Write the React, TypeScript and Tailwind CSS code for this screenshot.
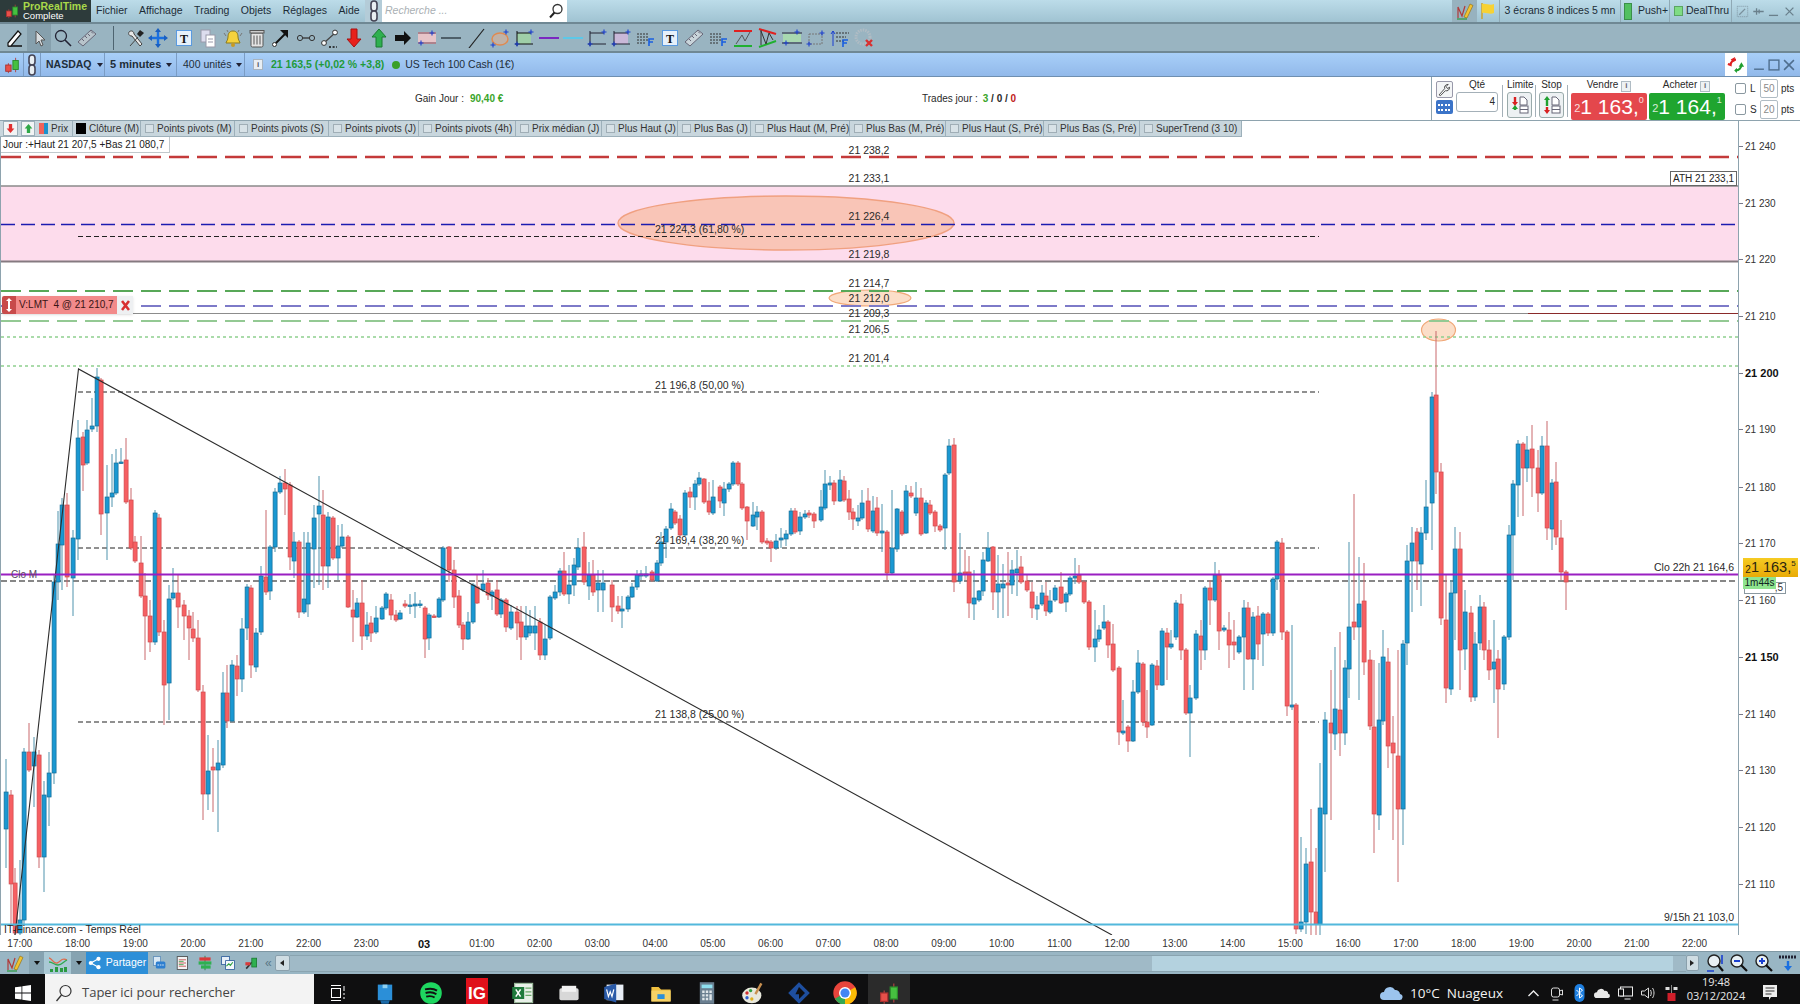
import type { ReactNode } from "react";

// x, body top, body bottom, 1 = blue / 0 = red, optional high, optional low (page px)
type Candle = [number, number, number, number, number?, number?];

const candles: Candle[] = [
  [5, 792, 829, 1, 759, 868], [10, 795, 884, 0, 790, 925], [14, 883, 933, 0, 868, 935], [19, 920, 933, 1, 860, 935],
  [23, 752, 920, 1, 748, 925], [28, 752, 770, 0, 723, 772], [33, 752, 766, 1, 737, 807], [38, 755, 857, 0, 750, 868],
  [43, 795, 857, 1, 781, 892], [48, 773, 797, 1, 752, 826], [53, 582, 773, 1, 575, 784], [57, 544, 582, 1, 511, 600],
  [61, 505, 545, 1, 498, 590], [66, 505, 577, 0, 493, 587], [72, 538, 578, 1, 530, 616], [77, 438, 539, 1, 420, 560],
  [82, 437, 465, 0, 432, 491], [86, 430, 463, 1, 420, 465], [91, 426, 429, 1, 398, 432], [96, 377, 426, 1, 368, 432],
  [100, 380, 514, 0, 378, 535], [106, 497, 513, 1, 465, 560], [111, 493, 497, 1, 454, 507], [115, 463, 493, 1, 449, 495],
  [120, 462, 463, 1, 448, 464], [125, 460, 502, 0, 438, 504], [130, 500, 548, 0, 488, 550], [134, 542, 561, 0, 536, 563],
  [140, 563, 596, 0, 536, 598], [144, 596, 616, 0, 573, 660], [149, 616, 642, 0, 600, 652], [154, 513, 642, 1, 510, 645],
  [158, 518, 632, 0, 514, 636], [163, 632, 685, 0, 620, 725], [168, 599, 683, 1, 585, 720], [172, 593, 598, 1, 568, 600],
  [177, 593, 607, 0, 575, 628], [183, 605, 616, 0, 600, 640], [188, 616, 628, 0, 610, 660], [192, 629, 638, 0, 612, 642],
  [197, 638, 690, 0, 620, 692], [202, 692, 794, 0, 685, 820], [207, 771, 794, 1, 735, 810], [212, 767, 770, 0, 748, 812],
  [217, 763, 770, 1, 740, 832], [222, 693, 765, 1, 672, 768], [226, 693, 721, 0, 665, 728], [231, 665, 721, 1, 660, 722],
  [236, 666, 679, 0, 655, 696], [241, 629, 679, 1, 618, 692], [246, 587, 628, 1, 584, 640], [250, 588, 665, 0, 585, 678],
  [255, 633, 667, 1, 628, 672], [260, 576, 632, 1, 566, 635], [265, 577, 592, 0, 510, 595], [269, 547, 591, 1, 545, 600],
  [274, 492, 547, 1, 488, 552], [279, 483, 492, 1, 476, 494], [284, 483, 489, 0, 469, 515], [289, 485, 557, 0, 482, 570],
  [293, 542, 561, 1, 532, 578], [298, 542, 612, 0, 540, 618], [303, 599, 612, 1, 532, 614], [307, 543, 604, 1, 532, 617],
  [313, 518, 549, 1, 505, 588], [318, 506, 514, 1, 476, 585], [322, 515, 566, 0, 490, 590], [327, 517, 566, 1, 512, 588],
  [332, 518, 558, 0, 516, 560], [337, 546, 558, 1, 525, 580], [341, 537, 546, 1, 524, 548], [347, 537, 607, 0, 535, 608],
  [352, 610, 617, 0, 590, 642], [356, 603, 617, 1, 598, 618], [361, 603, 636, 0, 580, 650], [366, 625, 636, 1, 612, 640],
  [370, 623, 633, 0, 616, 642], [375, 618, 632, 1, 606, 634], [381, 608, 619, 1, 606, 620], [385, 594, 608, 1, 592, 610],
  [390, 600, 615, 0, 594, 620], [395, 615, 620, 0, 610, 622], [399, 613, 619, 1, 610, 620], [404, 604, 606, 0, 600, 608],
  [409, 605, 606, 1, 594, 614], [414, 604, 606, 1, 592, 618], [419, 604, 605, 1, 600, 608], [424, 608, 639, 0, 606, 658],
  [428, 615, 638, 1, 613, 650], [433, 616, 617, 0, 614, 618], [438, 599, 617, 1, 597, 618], [442, 548, 600, 1, 546, 602],
  [448, 547, 570, 0, 546, 582], [453, 570, 597, 0, 560, 608], [458, 596, 625, 0, 590, 628], [462, 625, 639, 0, 622, 650],
  [467, 622, 639, 1, 612, 640], [472, 585, 622, 1, 583, 624], [476, 587, 603, 0, 575, 604], [482, 584, 590, 1, 570, 592],
  [487, 583, 595, 0, 578, 600], [491, 592, 596, 1, 590, 610], [496, 590, 614, 0, 580, 616], [500, 600, 614, 1, 598, 618],
  [505, 600, 627, 0, 598, 632], [510, 612, 628, 1, 605, 630], [516, 612, 623, 0, 606, 640], [520, 622, 637, 0, 606, 660],
  [525, 626, 637, 1, 606, 640], [529, 626, 633, 1, 610, 636], [534, 626, 633, 1, 606, 650], [539, 622, 655, 0, 618, 660],
  [544, 639, 655, 1, 625, 660], [549, 597, 638, 1, 595, 640], [554, 592, 598, 1, 585, 600], [559, 571, 592, 1, 568, 596],
  [563, 571, 594, 0, 552, 596], [568, 585, 594, 1, 565, 604], [573, 565, 585, 1, 558, 596], [577, 548, 567, 1, 538, 570],
  [583, 547, 582, 0, 532, 585], [588, 575, 586, 1, 562, 600], [592, 575, 592, 0, 560, 596], [597, 583, 590, 1, 570, 612],
  [602, 583, 590, 1, 570, 612], [611, 585, 607, 0, 580, 622], [617, 606, 611, 0, 596, 614], [621, 609, 611, 1, 596, 628],
  [627, 597, 609, 1, 595, 612], [631, 587, 597, 1, 583, 598], [636, 575, 587, 1, 570, 590], [640, 574, 576, 1, 570, 580],
  [645, 574, 576, 1, 566, 578], [651, 572, 580, 0, 570, 582], [656, 563, 581, 1, 560, 582], [660, 542, 563, 1, 532, 566],
  [665, 529, 542, 1, 526, 558], [670, 509, 528, 1, 503, 530], [674, 512, 523, 0, 510, 525], [679, 519, 535, 0, 515, 540],
  [684, 493, 535, 1, 490, 536], [689, 492, 497, 0, 487, 508], [694, 484, 497, 1, 480, 510], [698, 478, 484, 1, 472, 486],
  [703, 479, 502, 0, 478, 504], [708, 501, 512, 0, 482, 515], [712, 497, 513, 1, 480, 515], [719, 487, 501, 0, 485, 508],
  [723, 489, 503, 1, 482, 516], [728, 484, 489, 1, 482, 492], [732, 463, 484, 1, 461, 486], [737, 463, 484, 0, 461, 486],
  [741, 484, 508, 0, 482, 510], [746, 507, 521, 0, 506, 540], [752, 515, 526, 1, 502, 527], [756, 512, 517, 1, 506, 530],
  [761, 512, 542, 0, 510, 544], [766, 541, 543, 0, 538, 545], [770, 542, 548, 0, 540, 562], [775, 541, 548, 1, 534, 550],
  [780, 538, 540, 1, 528, 548], [785, 534, 539, 1, 530, 546], [790, 511, 534, 1, 508, 536], [794, 511, 532, 0, 508, 534],
  [799, 517, 531, 1, 512, 535], [804, 514, 517, 1, 510, 519], [808, 513, 515, 0, 510, 518], [813, 514, 521, 0, 512, 528],
  [820, 507, 520, 1, 490, 522], [824, 484, 508, 1, 470, 510], [829, 483, 485, 1, 476, 490], [833, 483, 501, 0, 480, 505],
  [839, 480, 501, 1, 470, 502], [843, 481, 500, 0, 476, 502], [848, 499, 512, 0, 490, 520], [852, 512, 519, 0, 508, 530],
  [857, 518, 521, 1, 505, 526], [861, 503, 518, 1, 490, 520], [867, 501, 529, 0, 488, 532], [872, 511, 531, 1, 496, 533],
  [876, 508, 533, 0, 497, 536], [881, 531, 533, 1, 504, 552], [886, 532, 573, 0, 530, 580], [891, 548, 573, 1, 490, 575],
  [896, 509, 549, 1, 508, 552], [901, 512, 534, 0, 510, 536], [905, 491, 533, 1, 485, 534], [910, 493, 496, 0, 486, 498],
  [915, 498, 513, 1, 482, 516], [920, 498, 534, 0, 488, 536], [925, 503, 533, 1, 500, 534], [929, 505, 513, 0, 500, 515],
  [934, 512, 526, 0, 510, 532], [939, 526, 530, 0, 524, 532], [944, 475, 528, 1, 473, 550], [948, 446, 473, 1, 439, 475],
  [953, 445, 582, 0, 438, 592], [959, 573, 581, 1, 533, 584], [964, 572, 574, 0, 550, 580], [968, 572, 603, 0, 556, 618],
  [973, 598, 604, 1, 570, 620], [978, 591, 600, 1, 590, 602], [982, 560, 591, 1, 552, 596], [987, 548, 561, 1, 532, 562],
  [992, 547, 592, 0, 546, 610], [997, 584, 592, 1, 555, 618], [1002, 584, 588, 1, 564, 618], [1007, 583, 585, 0, 552, 616],
  [1011, 570, 585, 1, 560, 594], [1016, 569, 573, 1, 550, 596], [1020, 567, 582, 0, 556, 584], [1026, 581, 590, 0, 575, 592],
  [1031, 592, 608, 0, 582, 618], [1036, 605, 609, 1, 596, 620], [1041, 593, 604, 1, 585, 606], [1045, 596, 611, 0, 582, 616],
  [1049, 601, 612, 1, 590, 614], [1054, 588, 600, 1, 585, 602], [1060, 587, 603, 0, 572, 604], [1065, 594, 602, 1, 592, 612],
  [1069, 578, 594, 1, 576, 596], [1074, 576, 578, 1, 558, 584], [1078, 575, 582, 0, 565, 584], [1083, 582, 602, 0, 580, 604],
  [1088, 602, 647, 0, 600, 650], [1094, 639, 647, 1, 610, 662], [1098, 630, 639, 1, 625, 642], [1103, 622, 628, 1, 605, 630],
  [1107, 622, 645, 0, 620, 658], [1112, 644, 670, 0, 624, 672], [1118, 668, 732, 0, 666, 745], [1122, 731, 733, 1, 700, 735],
  [1127, 727, 741, 0, 725, 752], [1132, 692, 741, 1, 680, 742], [1137, 663, 692, 1, 650, 694], [1142, 664, 722, 0, 662, 726],
  [1146, 722, 727, 0, 690, 738], [1151, 665, 725, 1, 663, 726], [1156, 666, 685, 0, 660, 690], [1161, 631, 685, 1, 628, 686],
  [1166, 633, 647, 0, 628, 680], [1170, 644, 647, 1, 630, 649], [1175, 603, 637, 1, 600, 640], [1180, 604, 650, 0, 594, 660],
  [1185, 650, 713, 0, 648, 715], [1189, 698, 713, 1, 685, 757], [1195, 634, 698, 1, 630, 700], [1200, 636, 650, 0, 620, 670],
  [1204, 588, 650, 1, 586, 660], [1209, 588, 600, 0, 580, 625], [1214, 575, 600, 1, 562, 602], [1218, 575, 631, 0, 570, 650],
  [1223, 628, 630, 1, 625, 632], [1228, 630, 645, 0, 612, 668], [1233, 642, 645, 0, 620, 660], [1238, 637, 652, 1, 635, 654],
  [1243, 608, 637, 1, 600, 690], [1247, 608, 659, 0, 602, 660], [1252, 617, 659, 1, 612, 690], [1257, 616, 644, 0, 606, 660],
  [1262, 614, 634, 1, 612, 666], [1267, 614, 633, 0, 612, 636], [1272, 579, 633, 1, 577, 636], [1276, 542, 579, 1, 540, 590],
  [1281, 543, 632, 0, 538, 640], [1286, 632, 706, 0, 630, 716], [1291, 705, 707, 1, 625, 710], [1295, 705, 929, 0, 703, 934],
  [1300, 922, 929, 1, 837, 932], [1305, 864, 922, 1, 848, 934], [1310, 862, 912, 0, 809, 935], [1315, 912, 924, 0, 848, 935],
  [1319, 808, 924, 1, 763, 935], [1324, 720, 814, 1, 712, 872], [1330, 723, 733, 0, 670, 820], [1334, 709, 734, 1, 647, 750],
  [1339, 710, 733, 0, 632, 756], [1344, 668, 733, 1, 660, 745], [1348, 627, 669, 1, 542, 698], [1353, 622, 627, 0, 494, 640],
  [1358, 604, 627, 1, 557, 700], [1363, 601, 662, 0, 563, 675], [1369, 660, 726, 0, 650, 730], [1373, 727, 814, 0, 660, 853],
  [1378, 720, 815, 1, 663, 830], [1382, 657, 721, 1, 630, 725], [1387, 662, 746, 0, 648, 768], [1392, 743, 753, 0, 716, 840],
  [1397, 756, 809, 0, 650, 882], [1402, 644, 809, 1, 640, 845], [1406, 561, 643, 1, 545, 665], [1411, 543, 561, 1, 527, 612],
  [1416, 532, 561, 0, 528, 590], [1420, 533, 564, 1, 527, 606], [1425, 507, 533, 1, 480, 540], [1431, 397, 503, 1, 392, 550],
  [1435, 395, 472, 0, 331, 494], [1440, 472, 618, 0, 463, 625], [1445, 620, 688, 0, 575, 703], [1450, 593, 689, 1, 580, 695],
  [1454, 549, 593, 1, 527, 640], [1459, 549, 650, 0, 532, 690], [1464, 612, 649, 1, 590, 670], [1470, 613, 697, 0, 606, 702],
  [1474, 644, 697, 1, 632, 701], [1479, 607, 643, 1, 595, 650], [1483, 607, 650, 0, 602, 660], [1488, 650, 670, 0, 640, 680],
  [1493, 662, 669, 1, 620, 703], [1497, 659, 689, 0, 650, 738], [1503, 637, 684, 1, 635, 690], [1508, 535, 637, 1, 525, 640],
  [1512, 484, 535, 1, 480, 580], [1517, 444, 485, 1, 440, 517], [1522, 444, 468, 0, 442, 516], [1526, 450, 468, 1, 436, 482],
  [1531, 449, 468, 0, 425, 497], [1537, 468, 493, 0, 450, 512], [1541, 446, 493, 1, 436, 495], [1546, 446, 528, 0, 421, 540],
  [1551, 483, 529, 1, 479, 550], [1555, 482, 537, 0, 462, 545], [1560, 538, 572, 0, 520, 580], [1565, 572, 582, 0, 570, 610],
];

const priceLevels = [
  ["21 240", 146], ["21 230", 203], ["21 220", 259], ["21 210", 316], ["21 200", 373], ["21 190", 429], ["21 180", 487],
  ["21 170", 543], ["21 160", 600], ["21 150", 657], ["21 140", 714], ["21 130", 770], ["21 120", 827], ["21 110", 884],
] as const;

const midLabels = [
  ["21 238,2", 150], ["21 233,1", 178], ["21 226,4", 216], ["21 219,8", 254], ["21 214,7", 283],
  ["21 212,0", 298], ["21 209,3", 313], ["21 206,5", 329], ["21 201,4", 358],
] as const;

const fibLabels = [
  ["21 224,3 (61,80 %)", 229], ["21 196,8 (50,00 %)", 385], ["21 169,4 (38,20 %)", 540], ["21 138,8 (25,00 %)", 714],
] as const;

const hours = [
  "17:00", "18:00", "19:00", "20:00", "21:00", "22:00", "23:00", "03", "01:00", "02:00", "03:00", "04:00", "05:00", "06:00", "07:00",
  "08:00", "09:00", "10:00", "11:00", "12:00", "13:00", "14:00", "15:00", "16:00", "17:00", "18:00", "19:00", "20:00", "21:00", "22:00",
];

const indicatorTabs: [string, number][] = [
  ["Points pivots (M)", 94], ["Points pivots (S)", 94], ["Points pivots (J)", 90], ["Points pivots (4h)", 97], ["Prix médian (J)", 86],
  ["Plus Haut (J)", 76], ["Plus Bas (J)", 73], ["Plus Haut (M, Pré)", 99], ["Plus Bas (M, Pré)", 96], ["Plus Haut (S, Pré)", 98],
  ["Plus Bas (S, Pré)", 96], ["SuperTrend (3 10)", 102],
];

function Ic({ size = 20, children }: { size?: number; children: ReactNode }) {
  return (
    <svg width={size} height={size} viewBox="0 0 20 20" fill="none" className="shrink-0">
      {children}
    </svg>
  );
}

const Plus = ({ x, y, c = "#1a3fd0" }: { x: number; y: number; c?: string }) => (
  <path d={`M${x - 2.5} ${y}h5M${x} ${y - 2.5}v5`} stroke={c} strokeWidth="1.1" />
);

const FibF = ({ c = "#333" }: { c?: string }) => (
  <Ic>
    <path d="M1 6h11M1 9h11M1 12h11M1 15h8" stroke={c} strokeWidth="1" strokeDasharray="2 1" />
    <path d="M13 18v-7h5M13 14h4" stroke="#1a5fe0" strokeWidth="1.6" />
  </Ic>
);

const CandleIcon = ({ size = 20 }: { size?: number }) => (
  <Ic size={size}>
    <path d="M6 8v11M14 2v16" stroke="#b04040" strokeWidth="1" />
    <rect x="3" y="10" width="6" height="7" fill="#e8504a" stroke="#a83030" />
    <rect x="11" y="5" width="6" height="10" fill="#46c040" stroke="#2a8a2a" />
  </Ic>
);

const LinkIcon = () => (
  <svg width="12" height="22" viewBox="0 0 12 22" fill="none" className="shrink-0">
    <rect x="3" y="1" width="6" height="10" rx="3" stroke="#445" strokeWidth="1.6" fill="#e8eef2" />
    <rect x="3" y="11" width="6" height="10" rx="3" stroke="#445" strokeWidth="1.6" fill="#e8eef2" />
  </svg>
);

const toolIcons: ReactNode[] = [
  <Ic><path d="M3 17l6-7 2 2-5 7zM11 10l3-5 3 2-3 5z" fill="#556" /><path d="M12 10l5 2" stroke="#c33" strokeWidth="1.5" /></Ic>,
  <Ic><path d="M5 4l2 2-3 3 2 2 3-3 6 7 2-2-7-6 3-3-3-3-3 1z" fill="#eee" stroke="#444" /></Ic>,
  <Ic><path d="M10 2v16M2 10h16" stroke="#1a6fe0" strokeWidth="2.4" /><path d="M10 0l3 4H7zM10 20l3-4H7zM0 10l4-3v6zM20 10l-4-3v6z" fill="#1a5fc0" /></Ic>,
  <Ic><rect x="2.5" y="2.5" width="15" height="15" fill="#e6f0fa" stroke="#5a9ae0" /><text x="10" y="15" textAnchor="middle" fontSize="12" fontWeight="700" fontFamily="Liberation Serif" fill="#111">T</text></Ic>,
  <Ic><rect x="3" y="2" width="9" height="12" fill="#dde" stroke="#99a" /><rect x="8" y="7" width="9" height="12" fill="#fff" stroke="#99a" /><path d="M10 11h5M10 14h5" stroke="#99a" /></Ic>,
  <Ic><path d="M10 3c-4 0-5 3-5 6 0 3-2 5-2 6h14c0-1-2-3-2-6 0-3-1-6-5-6z" fill="#f5d23c" stroke="#8a7a20" /><circle cx="10" cy="17" r="2" fill="#c89a20" /><path d="M1 5l2 3M19 5l-2 3M4 2l1 2M16 2l-1 2" stroke="#777" /></Ic>,
  <Ic><rect x="4" y="5" width="12" height="14" rx="1.5" fill="#e4e4e4" stroke="#555" /><rect x="3" y="2.5" width="14" height="2.5" fill="#ccc" stroke="#555" /><path d="M7 7.5v9M10 7.5v9M13 7.5v9" stroke="#555" /></Ic>,
  <Ic><path d="M3 17L15 5" stroke="#111" strokeWidth="2" /><path d="M17 2v8l-8-8z" fill="#111" /><circle cx="3.5" cy="16.5" r="2" fill="#fff" stroke="#333" /></Ic>,
  <Ic><circle cx="4" cy="10" r="2.6" stroke="#333" /><circle cx="16" cy="10" r="2.6" stroke="#333" /><path d="M7 10h6" stroke="#333" strokeWidth="1.3" /></Ic>,
  <Ic><path d="M5 14L15 5" stroke="#444" strokeWidth="1.2" /><circle cx="4" cy="15" r="2.4" fill="#fff" stroke="#333" /><circle cx="15" cy="4.5" r="2.4" fill="#fff" stroke="#333" /><path d="M9 19h8" stroke="#111" strokeWidth="1.5" strokeDasharray="2 1.6" /></Ic>,
  <Ic><path d="M7 1h6v10h4l-7 8-7-8h4z" fill="#e8201c" stroke="#a81010" /></Ic>,
  <Ic><path d="M10 1l7 8h-4v10H7V9H3z" fill="#2fb050" stroke="#1a7a30" /></Ic>,
  <Ic><path d="M2 7h9V3l7 7-7 7v-4H2z" fill="#111" /></Ic>,
  <Ic><rect x="1" y="6" width="18" height="8" fill="#e6c4c8" /><path d="M1 5h18M1 15h18" stroke="#c05058" /><Plus x={15} y={5} /><Plus x={4} y={15} /></Ic>,
  <Ic><path d="M0 10h20" stroke="#3c4a54" strokeWidth="1.6" /></Ic>,
  <Ic><path d="M3 20L18 1" stroke="#222" strokeWidth="1.2" /></Ic>,
  <Ic><ellipse cx="10" cy="11" rx="8" ry="6" fill="#e5b08f" fillOpacity=".5" stroke="#e08a50" strokeWidth="1.5" /><Plus x={16} y={4} /><Plus x={3} y={17} /></Ic>,
  <Ic><rect x="3" y="5" width="14" height="11" fill="#9fcfa8" /><path d="M3 5h14M1 16h18M3 3v15" stroke="#111" /><Plus x={17} y={4} /><Plus x={3} y={16} /></Ic>,
  <Ic><path d="M0 10h20" stroke="#7a28c0" strokeWidth="2" /></Ic>,
  <Ic><path d="M0 10h20" stroke="#5cc8e8" strokeWidth="2" /></Ic>,
  <Ic><path d="M3 5h14M1 16h18M3 3v15" stroke="#223" /><Plus x={17} y={4} /><Plus x={3} y={16} /></Ic>,
  <Ic><rect x="3" y="5" width="14" height="11" fill="#c9b8d8" /><path d="M3 5h14M1 16h18M3 3v15" stroke="#223" /><Plus x={17} y={4} /><Plus x={3} y={16} /></Ic>,
  <FibF />,
  <Ic><rect x="2.5" y="2.5" width="15" height="15" fill="#e6f0fa" stroke="#5a9ae0" /><text x="10" y="15" textAnchor="middle" fontSize="12" fontWeight="700" fontFamily="Liberation Serif" fill="#111">T</text></Ic>,
  <Ic><path d="M1 14L14 2l5 4L6 18z" fill="#c9d4da" stroke="#667" /><path d="M5 11l2 2M8 8l2 2M11 6l2 2M14 3.5l2 2" stroke="#667" /></Ic>,
  <FibF />,
  <Ic><path d="M1 3h18" stroke="#e02020" strokeWidth="2" /><path d="M1 18h18" stroke="#20b030" strokeWidth="2" /><path d="M3 16l6-9 3 6 5-9" stroke="#555" /></Ic>,
  <Ic><path d="M2 1l17 5" stroke="#e02020" strokeWidth="2" /><path d="M2 19l17-6" stroke="#20b030" strokeWidth="2" /><path d="M4 2v15M4 3l5 13 3-11 4 7" stroke="#333" /></Ic>,
  <Ic><rect x="1" y="6" width="18" height="8" fill="#a8d8b0" /><path d="M0 5h20M0 15h20" stroke="#223" /><Plus x={15} y={4} /><Plus x={4} y={15} /></Ic>,
  <Ic><rect x="3" y="6" width="13" height="10" stroke="#777" strokeDasharray="2 1" /><Plus x={16} y={5} /><Plus x={3} y={16} /></Ic>,
  <Ic><path d="M6 5h13M6 9h10M6 13h8" stroke="#333" strokeWidth="1" strokeDasharray="2 1" /><path d="M3 18V3M1 6l2-3 2 3" stroke="#1a3fd0" /><path d="M13 19v-7h5M13 15h4" stroke="#1a5fe0" strokeWidth="1.6" /></Ic>,
  <Ic><circle cx="9" cy="9" r="7" stroke="#b0bcc4" strokeWidth="3" strokeDasharray="1.5 1" /><path d="M12 12l6 6M18 12l-6 6" stroke="#d83030" strokeWidth="2.4" /></Ic>,
];

function IconSlot({ children, className = "" }: { children: ReactNode; className?: string }) {
  return <div className={`w-6 h-full flex items-center justify-center shrink-0 ${className}`}>{children}</div>;
}

function TopBar() {
  return (
    <div className="h-[24px] shrink-0 flex items-stretch text-[10.5px] text-[#1c2c36] bg-gradient-to-b from-[#bcdce9] to-[#a0c3d2] border-b-2 border-[#6f8894]">
      <div className="w-[91px] bg-[#2d3b3b] flex items-center pl-1 gap-[3px]">
        <CandleIcon size={16} />
        <div className="leading-[10px]">
          <div className="text-[10.5px] text-[#a8d84a] font-bold">ProRealTime</div>
          <div className="text-[9.5px] text-white">Complete</div>
        </div>
      </div>
      <div className="flex items-center ml-[5px] gap-[11.5px] w-[269px]">
        {["Fichier", "Affichage", "Trading", "Objets", "Réglages", "Aide"].map((m) => (
          <span key={m}>{m}</span>
        ))}
      </div>
      <div className="w-[17px] flex items-center justify-center bg-[#b4ccd8]"><LinkIcon /></div>
      <div className="w-[185px] bg-white flex items-center justify-between pl-[3px] pr-[3px]">
        <span className="italic text-[#aab0b4]">Recherche ...</span>
        <svg width="16" height="16" viewBox="0 0 16 16" fill="none">
          <circle cx="9.5" cy="6" r="4.5" stroke="#333" strokeWidth="1.3" />
          <path d="M6.5 9.5L2 14.5" stroke="#222" strokeWidth="2" />
        </svg>
      </div>
      <div className="flex-1" />
      <div className="w-[25px] bg-[#97b2bf] flex items-center justify-center">
        <Ic><path d="M3 17V6l4 9 3-10" stroke="#b03a3a" strokeWidth="1.2" /><path d="M9 16L15 3l3 1.5L12 17z" fill="#f2c230" stroke="#8a6a10" strokeWidth=".6" /><path d="M2 18h10" stroke="#2a9a40" strokeWidth="1.2" /></Ic>
      </div>
      <div className="w-[23px] flex items-center justify-center border-r border-[#8fa9b5]">
        <Ic><path d="M4 2v16" stroke="#c9a63a" strokeWidth="1.6" /><path d="M4 3c4-1 8 2 12 0v9c-4 2-8-1-12 0z" fill="#f7d234" /></Ic>
      </div>
      <div className="w-[121px] flex items-center justify-center border-r border-[#8fa9b5]">3 écrans 8 indices 5 mn</div>
      <div className="w-[49px] flex items-center gap-[6px] pl-[3px] border-r border-[#8fa9b5]">
        <div className="w-[8px] h-[17px] bg-[#52c060] border border-[#3b8f4a]" />
        <span>Push+</span>
      </div>
      <div className="w-[62px] flex items-center gap-[3px] pl-1 border-r border-[#8fa9b5]">
        <div className="w-[9px] h-[10px] bg-[#7fdc84] border border-[#5aa562]" />
        <span>DealThru</span>
      </div>
      <div className="w-[68px] flex items-center justify-around px-[3px]">
        <Ic size={13}><rect x="2" y="2" width="16" height="16" stroke="#7a909c" strokeDasharray="2 1" /><path d="M5 15L14 6" stroke="#7a909c" strokeWidth="2" /></Ic>
        <Ic size={13}><path d="M2 10h16M7 5v10M11 7v6" stroke="#6a808c" strokeWidth="2" /></Ic>
        <Ic size={13}><path d="M3 16h14" stroke="#6a808c" strokeWidth="2" /></Ic>
        <Ic size={13}><path d="M4 4l12 12M16 4L4 16" stroke="#6a808c" strokeWidth="2" /></Ic>
      </div>
    </div>
  );
}

function ToolBar() {
  return (
    <div className="h-[29px] shrink-0 flex items-center bg-[#99b4c1] border-b-2 border-[#6f8894] pl-[3px]">
      <IconSlot><Ic><path d="M3 18h14" stroke="#111" strokeWidth="1.5" /><path d="M3 15L13 3l3 3L6 18H3z" fill="#fff" stroke="#111" strokeWidth="1.2" /></Ic></IconSlot>
      <IconSlot className="bg-[#86a0ad]"><Ic><path d="M7 3v13l3-3 2 5 2-1-2-5h4z" fill="#d8dde0" stroke="#555" /></Ic></IconSlot>
      <IconSlot><Ic><circle cx="8" cy="8" r="5.5" stroke="#223" strokeWidth="1.3" /><path d="M12 12l6 6" stroke="#223" strokeWidth="1.6" /></Ic></IconSlot>
      <IconSlot><Ic><path d="M1 14L14 2l5 4L6 18z" fill="#b8c4cb" stroke="#667" /><path d="M5 11l2 2M8 8l2 2M11 6l2 2M14 3.5l2 2" stroke="#667" /></Ic></IconSlot>
      <div className="w-[1px] h-[24px] bg-[#4e6470] ml-[14px] mr-[12px] shrink-0" />
      <Ic><path d="M4 18l8-9M3 4c2-2 5-1 5 2l8 10-2 2L6 8C3 8 2 6 3 4z" fill="#e8e8e8" stroke="#444" /><path d="M11 6l3-4 4 3-4 4z" fill="#222" /></Ic>
      <div className="flex items-center ml-[2px]">
        {toolIcons.slice(2, 3)}
        <div className="w-[4px]" />
        {toolIcons.slice(3).map((icon, i) => (
          <div key={i} className="w-[24.3px] flex justify-center shrink-0">{icon}</div>
        ))}
      </div>
    </div>
  );
}

function SymbolBar() {
  const caret = <span className="w-0 h-0 border-x-[3px] border-x-transparent border-t-[4px] border-t-[#223]" />;
  return (
    <div className="h-[24px] shrink-0 flex items-stretch bg-gradient-to-b from-[#a8cff8] to-[#92b9ea] border-b border-[#6f8fb0] text-[10.5px] text-[#1e2e3a]">
      <div className="w-[24px] flex items-center justify-center border-r border-[#7a9cc4]"><CandleIcon size={18} /></div>
      <div className="w-[17px] flex items-center justify-center border-r border-[#7a9cc4]"><LinkIcon /></div>
      <div className="w-[64px] flex items-center gap-[5px] pl-[5px] font-bold border-r border-[#7a9cc4]">NASDAQ {caret}</div>
      <div className="w-[72px] flex items-center gap-[5px] pl-[5px] font-bold text-[11px] border-r border-[#7a9cc4]">5 minutes {caret}</div>
      <div className="w-[68px] flex items-center gap-[5px] pl-[6px] border-r border-[#7a9cc4]">400 unités {caret}</div>
      <div className="flex items-center pl-[8px] gap-[8px]">
        <span className="w-[10px] h-[11px] bg-[#e8eef4] border border-[#a8b4c0] flex items-center justify-center text-[8px] font-bold text-[#556]">i</span>
        <span className="font-bold text-[#1f9a3a]">21 163,5 (+0,02 % +3,8)</span>
        <span className="w-[8px] h-[8px] rounded-full bg-[#3aa028] -mr-[3px]" />
        <span>US Tech 100 Cash (1€)</span>
      </div>
      <div className="flex-1" />
      <div className="w-[22px] bg-white flex items-center justify-center">
        <Ic size={18}><path d="M10 4a6 6 0 00-6 6l-3-1" stroke="#e02020" strokeWidth="2.4" /><path d="M9 1L4 4l4 3z" fill="#e02020" /><path d="M10 16a6 6 0 006-6" stroke="#20a030" strokeWidth="2.4" /><path d="M16 7l3 5h-6zM11 13l-3 3 3 3z" fill="#20a030" /></Ic>
      </div>
      <div className="w-[53px] flex items-center justify-around px-[4px]">
        <Ic size={14}><path d="M3 16h14" stroke="#4f6e8e" strokeWidth="2" /></Ic>
        <Ic size={14}><rect x="3" y="3" width="14" height="14" stroke="#4f6e8e" strokeWidth="2" /></Ic>
        <Ic size={14}><path d="M3 3l14 14M17 3L3 17" stroke="#4f6e8e" strokeWidth="2.2" /></Ic>
      </div>
    </div>
  );
}

function PriceButton({ head, main, tail, color }: { head: string; main: string; tail: string; color: string }) {
  return (
    <div className={`w-[76px] h-[27px] rounded-[2px] flex items-center justify-center text-white whitespace-nowrap ${color}`}>
      <span className="text-[11px] mt-[5px] opacity-80">{head}</span>
      <span className="text-[21px] leading-none">{main}</span>
      <span className="text-[9px] -mt-[10px] opacity-80">{tail}</span>
    </div>
  );
}

const InfoBox = () => (
  <span className="inline-flex w-[10px] h-[11px] ml-[3px] bg-[#eef2f4] border border-[#b0bcc4] items-center justify-center text-[8px] font-bold text-[#667]">i</span>
);

const OrderIcon = ({ up }: { up: boolean }) => (
  <div className="w-[25px] h-[26px] rounded-[3px] border border-[#9aa] bg-[#edf1f3] flex items-center justify-center">
    <Ic>
      <path d={up ? "M5 11V4" : "M5 2v6"} stroke={up ? "#20a030" : "#d82020"} strokeWidth="2.4" />
      <path d={up ? "M5 1l3 4H2z" : "M5 11l3-4H2z"} fill={up ? "#20a030" : "#d82020"} />
      <path d={up ? "M5 12v4" : "M5 15v-2"} stroke={up ? "#d82020" : "#20a030"} strokeWidth="2.4" />
      <path d={up ? "M5 19l3-4H2z" : "M5 10l3 4H2z"} fill={up ? "#d82020" : "#20a030"} />
      <path d="M10 2h4l3 3v5h-7z" fill="#fff" stroke="#667" />
      <rect x="10" y="11" width="8" height="7" fill="#fff" stroke="#667" />
      <path d="M10 14.5h8" stroke="#667" />
    </Ic>
  </div>
);

function InfoPanel() {
  return (
    <div className="h-[44px] shrink-0 bg-white flex items-stretch text-[10px] text-[#2a2a2a] border-b border-[#8ea3ae]">
      <div className="flex-1 relative flex items-center">
        <div className="ml-[415px] w-[507px] flex items-center gap-[6px]">
          <span>Gain Jour :</span>
          <span className="font-bold text-[#3aa52a]">90,40 €</span>
        </div>
        <div className="flex items-center gap-[5px]">
          <span>Trades jour :</span>
          <span className="font-bold"><span className="text-[#3aa52a]">3</span> / 0 / <span className="text-[#c02020]">0</span></span>
        </div>
      </div>
      <div className="w-[369px] border-l border-[#8ea3ae] flex items-start pt-[3px] pl-[3px]">
        <div className="w-[18px] flex flex-col items-center gap-[2px] mt-[1px]">
          <div className="w-[17px] h-[17px] border border-[#99a] rounded-[2px] flex items-center justify-center bg-[#f3f5f6]">
            <Ic size={14}><path d="M3 17l8-9c-1-3 1-6 5-6l-3 3 2 3 3-2c0 4-3 6-6 5l-7 7z" stroke="#333" strokeWidth="1.2" /></Ic>
          </div>
          <div className="w-[17px] h-[14px] bg-[#3b74c8] rounded-[2px] flex items-center justify-center">
            <span className="w-[12px] h-[7px] border-y-2 border-dotted border-white" />
          </div>
        </div>
        <div className="w-[42px] ml-[3px]">
          <div className="text-center leading-[12px] mt-[-1px]">Qté</div>
          <div className="h-[20px] mt-[1px] rounded-[3px] border border-[#a4b0b8] text-right pr-[2px] leading-[18px]">4</div>
        </div>
        <div className="w-[1px] h-[32px] bg-[#a4b0b8] ml-[4px] mt-[5px]" />
        <div className="w-[25px] ml-[4px] text-center">
          <div className="leading-[12px] mt-[-1px] mb-[1px]">Limite</div>
          <OrderIcon up={false} />
        </div>
        <div className="w-[1px] h-[32px] bg-[#a4b0b8] ml-[3px] mt-[5px]" />
        <div className="w-[25px] ml-[3px] text-center">
          <div className="leading-[12px] mt-[-1px] mb-[1px]">Stop</div>
          <OrderIcon up />
        </div>
        <div className="w-[1px] h-[32px] bg-[#a4b0b8] ml-[3px] mt-[5px]" />
        <div className="w-[76px] ml-[3px]">
          <div className="text-center leading-[12px] mt-[-1px] mb-[1px]">Vendre<InfoBox /></div>
          <PriceButton head="2" main="1 163," tail="0" color="bg-[#e4474c]" />
        </div>
        <div className="w-[75px] ml-[2px]">
          <div className="text-center leading-[12px] mt-[-1px] mb-[1px]">Acheter<InfoBox /></div>
          <PriceButton head="2" main="1 164," tail="1" color="bg-[#1fa52f]" />
        </div>
        <div className="ml-[11px] w-[62px] flex flex-col gap-[2px] mt-[-1px]">
          {[["L", "50"], ["S", "20"]].map(([k, v]) => (
            <div key={k} className="flex items-center h-[19px]">
              <span className="w-[11px] h-[11px] rounded-[2px] border border-[#8a98a0] mr-[4px]" />
              <span className="w-[10px]">{k}</span>
              <span className="w-[18px] h-[19px] border border-[#b0bcc4] rounded-[2px] text-center text-[#8a8a8a] leading-[17px] mr-[3px]">{v}</span>
              <span>pts</span>
            </div>
          ))}
        </div>
      </div>
    </div>
  );
}

function TabsRow() {
  return (
    <div className="h-[16px] shrink-0 flex items-stretch bg-white text-[10px] text-[#333]">
      <div className="flex items-stretch bg-[#c8d6dd] border-b border-[#9db0ba] pl-[3px]">
        <div className="w-[15px] flex items-center justify-center border border-[#9db0ba] bg-[#f2f4f5]"><Ic size={11}><path d="M7 2h6v8h4l-7 8-7-8h4z" fill="#e03030" /></Ic></div>
        <div className="w-[3px]" />
        <div className="w-[14px] flex items-center justify-center border border-[#9db0ba] bg-[#f2f4f5]"><Ic size={11}><path d="M10 2l7 8h-4v8H7v-8H3z" fill="#30a848" /></Ic></div>
        <div className="w-[36px] flex items-center gap-[3px] pl-[2px] ml-[2px] border-r border-[#9db0ba]">
          <span className="w-[5px] h-[11px] bg-[#f0625a]" /><span className="w-[4px] h-[11px] bg-[#1b92cc] -ml-[3px]" /><span>Prix</span>
        </div>
        <div className="w-[68px] flex items-center gap-[3px] pl-[3px] border-r border-[#9db0ba]">
          <span className="w-[10px] h-[11px] bg-black" /><span className="whitespace-nowrap">Clôture (M)</span>
        </div>
        {indicatorTabs.map(([label, w]) => (
          <div key={label} style={{ width: w }} className="flex items-center gap-[3px] pl-[4px] border-r border-[#9db0ba] whitespace-nowrap">
            <span className="w-[9px] h-[9px] border border-[#a0aeb6] bg-[#d8e2e7] shrink-0" />
            <span>{label}</span>
          </div>
        ))}
      </div>
    </div>
  );
}

function wick(x: number, y1: number, y2: number, blue: number) {
  return <line x1={x} x2={x} y1={y1} y2={y2} stroke={blue ? "#4e93ad" : "#c9686c"} strokeWidth="1" />;
}

function PriceChart() {
  return (
    <svg viewBox="0 137 1738 798" width="1738" height="798" className="absolute inset-0">
      <defs>
        <clipPath id="plot"><rect x="0" y="137" width="1737" height="798" /></clipPath>
      </defs>
      <g clipPath="url(#plot)" fontFamily="Liberation Sans" fontSize="10.5" fill="none">
        <rect x="0" y="186" width="1738" height="76" fill="#fddcec" />
        <ellipse cx="785" cy="223" rx="168" ry="27" fill="#f5a878" fillOpacity=".45" stroke="#f0a080" strokeWidth="1.4" />
        <ellipse cx="869" cy="298" rx="41" ry="8" fill="#fbd0b0" fillOpacity=".7" stroke="#f0a878" strokeWidth="1.2" />
        <ellipse cx="1437.5" cy="330" rx="17" ry="11" fill="#f8c8a4" fillOpacity=".6" stroke="#f0a878" strokeWidth="1.2" />
        <path d="M0 186h1738" stroke="#8a8a8a" strokeWidth="1.6" />
        <path d="M0 261.5h1738" stroke="#857a80" strokeWidth="2" />
        <path d="M0 157h1738" stroke="#c43a3a" strokeWidth="2.4" strokeDasharray="20 8" />
        <path d="M0 224.5h1738" stroke="#1c1cb0" strokeWidth="1.4" strokeDasharray="14 6" />
        <path d="M0 291h1738" stroke="#58a858" strokeWidth="2.2" strokeDasharray="20 8" />
        <path d="M0 306h1738" stroke="#7d7ac8" strokeWidth="2.2" strokeDasharray="20 8" />
        <path d="M0 313.5h1527" stroke="#8c8c8c" strokeWidth="1" />
        <path d="M1527 313.5h211" stroke="#8a2a2a" strokeWidth="1" />
        <path d="M0 321h1738" stroke="#93c993" strokeWidth="2.2" strokeDasharray="20 8" />
        <path d="M0 337h1738M0 366h1738" stroke="#8fcf8f" strokeWidth="1.4" strokeDasharray="3 3" />
        <path d="M77 236.5h1241M77 392h1241M77 548h1241M77 722h1241" stroke="#222" strokeWidth="1.2" strokeDasharray="5 3" />
        <path d="M0 581h1738" stroke="#111" strokeWidth="1.2" strokeDasharray="6 3" />

        {candles.map(([x, top, bot, blue, hi, lo]) => (
          <g key={x}>
            {wick(x, hi ?? top, top, blue)}
            {wick(x, bot, lo ?? bot, blue)}
            <rect
              x={x - 1.9}
              y={top}
              width="4"
              height={Math.max(bot - top, 1.5)}
              fill={blue ? "#1a98d2" : "#f65f62"}
              stroke={blue ? "#146c96" : "#d14a4d"}
              strokeWidth=".7"
            />
          </g>
        ))}

        <path d="M14 935L77.5 369L1111 935" stroke="#2c2c2c" strokeWidth="1.1" />
        <path d="M0 574.5h1738" stroke="#9a1fc2" strokeWidth="2" />
        <path d="M0 924.5h1738" stroke="#52b8dc" strokeWidth="2" />

        <g fill="#2a2a2a">
          {midLabels.map(([t, y]) => (
            <text key={t} x="868" y={y + 4} textAnchor="middle">{t}</text>
          ))}
          {fibLabels.map(([t, y]) => (
            <text key={t} x="654" y={y + 4}>{t}</text>
          ))}
          <text x="10" y="578" fill="#5a4a60" fontSize="10">Clo M</text>
          <text x="1733" y="571" textAnchor="end">Clo 22h 21 164,6</text>
          <text x="1733" y="921" textAnchor="end">9/15h 21 103,0</text>
          <text x="3" y="933">IT-Finance.com - Temps Réel</text>
        </g>
      </g>
    </svg>
  );
}

function ChartArea() {
  return (
    <div className="flex-1 relative bg-white border-l border-[#8ea3ae] overflow-hidden">
      <PriceChart />
      <div className="absolute left-0 top-0 w-[169px] h-[16px] bg-white border-b border-r border-[#c0c8cc] text-[10px] leading-[15px] pl-[2px] text-[#222] whitespace-nowrap">
        Jour :+Haut 21 207,5 +Bas 21 080,7
      </div>
      <div className="absolute left-[1669px] top-[34px] w-[67px] h-[15px] bg-white border border-[#666] text-[10px] leading-[13px] text-center text-[#222] whitespace-nowrap">
        ATH 21 233,1
      </div>
      <div className="absolute left-[1px] top-[159px] h-[18px] flex text-[10px] text-[#3a1414] shadow-sm">
        <div className="w-[14px] bg-[#c84a4a] rounded-l-[2px] flex items-center justify-center">
          <svg width="6" height="14" viewBox="0 0 6 14"><path d="M3 0l3 3H4v8h2l-3 3-3-3h2V3H0z" fill="#fff" /></svg>
        </div>
        <div className="w-[101px] bg-[#f28a8a] pl-[3px] leading-[18px] whitespace-pre">V:LMT  4 @ 21 210,7</div>
        <div className="w-[16px] bg-[#eef0f2] flex items-center justify-center text-[#d83030]">
          <svg width="9" height="11" viewBox="0 0 9 11"><path d="M1 1l7 9M8 1l-7 9" stroke="#d83030" strokeWidth="2.6" /></svg>
        </div>
      </div>
    </div>
  );
}

function PriceAxis() {
  return (
    <div className="w-[62px] shrink-0 relative bg-white border-l border-[#8ea3ae] text-[10px] text-[#333]">
      {priceLevels.map(([t, y]) => {
        const major = t === "21 200" || t === "21 150";
        return (
          <div key={t} style={{ top: y - 121 - 7 }} className="absolute left-0 h-[14px] flex items-center">
            <span className="w-[4px] h-[1px] bg-[#778]" />
            <span className={major ? "ml-[2px] text-[11px] font-bold text-[#111]" : "ml-[2px]"}>{t}</span>
          </div>
        );
      })}
      <div className="absolute left-[5px] top-[461px] w-[42px] h-[12px] bg-white border border-[#8a98a0] text-right pr-[2px] text-[10px] leading-[10px]">,5</div>
      <div className="absolute left-[4px] top-[437px] w-[55px] h-[19px] bg-gradient-to-b from-[#f6cb22] to-[#e8aa06] flex items-center justify-center text-[#2a2410] whitespace-nowrap">
        <span className="text-[10px] mt-[4px]">2</span>
        <span className="text-[14.5px] leading-none">1 163,</span>
        <span className="text-[8px] -mt-[8px]">5</span>
      </div>
      <div className="absolute left-[4px] top-[456px] w-[33px] h-[12px] bg-[#8fe48f] text-[10px] leading-[12px] text-center text-[#122]">1m44s</div>
    </div>
  );
}

function TimeAxis() {
  return (
    <div className="h-[16px] shrink-0 bg-white flex text-[10px] text-[#333] pt-[1px] overflow-hidden">
      <div className="flex -ml-[9px]">
        {hours.map((h, i) => (
          <div key={i} className="w-[57.76px] shrink-0 text-center">
            <span className={h === "03" ? "font-bold text-[11px] text-[#111]" : ""}>{h}</span>
          </div>
        ))}
      </div>
    </div>
  );
}

function BottomBar() {
  const caret = <span className="w-0 h-0 border-x-[3px] border-x-transparent border-t-[4px] border-t-[#111]" />;
  return (
    <div className="h-[23px] shrink-0 flex items-center bg-[#99b6c4] border-t border-[#7f98a4] text-white">
      <div className="w-[29px] flex justify-center">
        <Ic><path d="M3 17V6l4 9 3-10" stroke="#b03a3a" strokeWidth="1.2" /><path d="M9 16L15 3l3 1.5L12 17z" fill="#f2c230" stroke="#8a6a10" strokeWidth=".6" /><path d="M2 18h10" stroke="#2a9a40" strokeWidth="1.2" /></Ic>
      </div>
      <div className="w-[15px] flex justify-center bg-[#86a3b1] h-full items-center">{caret}</div>
      <div className="w-[27px] h-full flex items-center justify-center bg-[#a9c8d4]">
        <Ic><path d="M1 5c3 0 4 6 8 5s4-6 10-3" stroke="#e06a4a" strokeWidth="1.3" /><path d="M1 9c4 0 5 3 9 3s5-3 9-5" stroke="#30a850" strokeWidth="1.3" /><path d="M2 16h3v3H2zM7 14h3v5H7zM12 15h3v4h-3zM16 14h3v5h-3z" fill="#2a9a40" /></Ic>
      </div>
      <div className="w-[15px] flex justify-center bg-[#86a3b1] h-full items-center">{caret}</div>
      <div className="w-[62px] h-full bg-[#2d8fd8] flex items-center justify-center gap-[4px] text-[10.5px]">
        <Ic size={14}><circle cx="15" cy="4" r="3" fill="#fff" /><circle cx="4" cy="10" r="3" fill="#fff" /><circle cx="15" cy="16" r="3" fill="#fff" /><path d="M15 4L4 10l11 6" stroke="#fff" strokeWidth="1.6" /></Ic>
        Partager
      </div>
      <div className="flex items-center gap-[7px] ml-[3px]">
        <Ic size={16}><rect x="3" y="2" width="9" height="11" fill="#d8e8f4" stroke="#5a8ab8" /><rect x="6" y="8" width="12" height="9" rx="2" fill="#2d7fd0" /><path d="M8 12.5h8" stroke="#fff" strokeDasharray="2 1" /></Ic>
        <Ic size={16}><rect x="4" y="2" width="13" height="16" fill="#f4f4f4" stroke="#444" /><path d="M6 6h9M6 10h9M6 14h9" stroke="#c04040" /><path d="M6 8h6M6 12h6" stroke="#30a040" /></Ic>
        <Ic size={16}><path d="M10 1v18" stroke="#1a7a30" /><rect x="3" y="3" width="14" height="4" fill="#d83a3a" /><rect x="2" y="8" width="16" height="4" fill="#2fb050" /><rect x="5" y="13" width="12" height="4" fill="#2fb050" /></Ic>
        <Ic size={16}><rect x="2" y="2" width="10" height="10" fill="#e8f0f8" stroke="#2a5a9a" /><rect x="7" y="7" width="11" height="11" fill="#f4f8fc" stroke="#2a5a9a" /><path d="M8 14l3-3 2 2 3-4" stroke="#30a040" strokeWidth="1.3" /></Ic>
        <Ic size={16}><path d="M4 17l7-8" stroke="#333" strokeWidth="2" /><path d="M3 9h6v4H3z" fill="#d83a3a" /><rect x="11" y="4" width="6" height="11" fill="#2fb050" stroke="#1a7a30" /></Ic>
      </div>
      <span className="ml-[6px] text-[12px] text-[#5a7684] leading-none">«</span>
      <div className="ml-[3px] w-[15px] h-[16px] rounded-[2px] bg-[#cfdde3] border border-[#8aa0ac] flex items-center justify-center">
        <span className="w-0 h-0 border-y-[3px] border-y-transparent border-r-[4px] border-r-[#222]" />
      </div>
      <div className="w-[862px] h-[17px] bg-[#a0bac7] border-y border-[#8aa4b0]" />
      <div className="w-[521px] h-[17px] bg-[#b4d2df] border-y border-[#8aa4b0]" />
      <div className="w-[13px] h-[17px] bg-[#a0bac7] border-y border-[#8aa4b0]" />
      <div className="w-[13px] h-[16px] rounded-[2px] bg-[#cfdde3] border border-[#8aa0ac] flex items-center justify-center">
        <span className="w-0 h-0 border-y-[3px] border-y-transparent border-l-[4px] border-l-[#222]" />
      </div>
      <div className="flex-1 flex items-center justify-around pl-[4px]">
        <Ic><circle cx="9" cy="8" r="6" fill="#e8f0f4" stroke="#222" strokeWidth="1.4" /><path d="M13 12l5 6" stroke="#111" strokeWidth="2.2" /><path d="M2 18h7M17 2v9" stroke="#1a3fd0" strokeWidth="1.6" /></Ic>
        <Ic><circle cx="8" cy="8" r="6" fill="#e8f0f4" stroke="#222" strokeWidth="1.4" /><path d="M5 8h6" stroke="#1a3fd0" strokeWidth="2" /><path d="M12 12l6 6" stroke="#111" strokeWidth="2.2" /></Ic>
        <Ic><circle cx="8" cy="8" r="6" fill="#e8f0f4" stroke="#222" strokeWidth="1.4" /><path d="M5 8h6M8 5v6" stroke="#1a3fd0" strokeWidth="2" /><path d="M12 12l6 6" stroke="#111" strokeWidth="2.2" /></Ic>
        <Ic><path d="M1 4h18" stroke="#223" strokeWidth="3" strokeDasharray="2 1" /><path d="M10 8v6" stroke="#1a6fe0" strokeWidth="2.4" /><path d="M6 13h8l-4 5z" fill="#1a6fe0" /></Ic>
      </div>
    </div>
  );
}

function TaskBar() {
  const apps: ReactNode[] = [
    <Ic size={24}><rect x="4" y="3" width="12" height="13" fill="#2b8fd8" /><rect x="8" y="3" width="4" height="3" fill="#8fd0f0" /><path d="M6 16h8l-1 3H7z" fill="#1a6aa8" /></Ic>,
    <Ic size={24}><circle cx="10" cy="10" r="9" fill="#1ed760" /><path d="M5 7c4-1 7-1 10 1M5.5 10c3-1 6-1 9 1M6 13c3-.8 5-.6 7 .8" stroke="#111" strokeWidth="1.6" fill="none" /></Ic>,
    <div className="w-[22px] h-[30px] bg-[#e0111b] text-white font-bold text-[17px] leading-[32px] text-center font-['Liberation_Sans',sans-serif]">IG</div>,
    <Ic size={24}><rect x="3" y="2" width="15" height="16" fill="#e8f0e8" stroke="#9ab89a" /><rect x="1" y="5" width="10" height="10" fill="#1f7a3c" /><path d="M4 7l4 6M8 7l-4 6" stroke="#fff" strokeWidth="1.3" /><path d="M12 6h5M12 9h5M12 12h5" stroke="#6aa86a" /></Ic>,
    <Ic size={24}><rect x="2" y="6" width="16" height="10" rx="1.5" fill="#d8d8d8" /><rect x="4" y="4" width="12" height="5" fill="#f2f2f2" /></Ic>,
    <Ic size={24}><rect x="3" y="3" width="14" height="13" fill="#e8eef6" /><path d="M1 5l10-3v16L1 15z" fill="#2a5aa8" /><path d="M3 7l1.5 6 1.5-4 1.5 4L9 7" stroke="#fff" /></Ic>,
    <Ic size={24}><path d="M2 5h6l2 2h8v10H2z" fill="#f0c040" /><rect x="2" y="8" width="16" height="9" fill="#f6d266" /><rect x="7" y="11" width="6" height="4" fill="#2d8fd8" /></Ic>,
    <Ic size={24}><rect x="4" y="1" width="12" height="18" fill="#6a7f90" /><rect x="5.5" y="3" width="9" height="3" fill="#8fe0f0" /><path d="M6 8h2v2H6zM9 8h2v2H9zM12 8h2v2h-2zM6 11h2v2H6zM9 11h2v2H9zM12 11h2v5h-2zM6 14h2v2H6zM9 14h2v2H9z" fill="#dfe6ea" /></Ic>,
    <Ic size={24}><ellipse cx="9" cy="12" rx="8" ry="6.5" fill="#e8e8dc" /><circle cx="5" cy="10" r="1.4" fill="#d03030" /><circle cx="8" cy="8" r="1.4" fill="#30a040" /><circle cx="5" cy="14" r="1.4" fill="#3060d0" /><circle cx="9" cy="15" r="1.4" fill="#e0b020" /><path d="M12 11l5-9" stroke="#c89050" strokeWidth="2" /></Ic>,
    <Ic size={24}><path d="M10 1l9 9-9 9-9-9z" fill="#1e4fa0" /><path d="M10 5l5 5-5 5v-4H7z" fill="#0f0f10" /></Ic>,
    <Ic size={26}><circle cx="10" cy="10" r="9" fill="#e8453c" /><path d="M10 10L2.2 14.5A9 9 0 0010 19z" fill="#34a853" /><path d="M10 10v9a9 9 0 007.8-13.5z" fill="#fbbc05" /><circle cx="10" cy="10" r="4.6" fill="#fff" /><circle cx="10" cy="10" r="3.5" fill="#4285f4" /></Ic>,
  ];
  return (
    <div className="h-[30px] shrink-0 flex items-center bg-[#0f0f10] text-[#f2f2f2] font-['Open_Sans',sans-serif] overflow-hidden pt-[8px]">
      <div className="w-[45px] flex justify-center">
        <svg width="16" height="16" viewBox="0 0 16 16" fill="#fff"><path d="M0 2.3l6.5-.9v6.2H0zM7.3 1.3L16 0v7.6H7.3zM0 8.4h6.5v6.2L0 13.7zM7.3 8.4H16V16l-8.7-1.2z" /></svg>
      </div>
      <div className="w-[269px] h-[30px] -mt-[8px] pt-[8px] bg-[#f3f3f3] flex items-center pl-[10px] gap-[9px] text-[#444] text-[13px]">
        <svg width="18" height="18" viewBox="0 0 18 18" fill="none"><circle cx="10.5" cy="7" r="5.5" stroke="#333" strokeWidth="1.2" /><path d="M6.5 11L1.5 17" stroke="#333" strokeWidth="1.3" /></svg>
        <span className="whitespace-nowrap">Taper ici pour rechercher</span>
      </div>
      <div className="w-[48px] flex justify-center">
        <svg width="14" height="16" viewBox="0 0 14 16" fill="none" stroke="#fff"><rect x=".5" y="3.5" width="9" height="9" /><path d="M0 .5h10M0 15.5h10M13 1v5M13 8v2M13 12v2" /></svg>
      </div>
      <div className="flex items-center">
        {apps.map((a, i) => (
          <div key={i} className="w-[46px] h-[22px] flex items-center justify-center shrink-0">{a}</div>
        ))}
      </div>
      <div className="w-[42px] h-[30px] -mt-[8px] pt-[8px] bg-[#2b2b2b] flex items-center justify-center"><CandleIcon size={24} /></div>
      <div className="flex-1" />
      <div className="flex items-center text-[13.5px]">
        <svg width="24" height="16" viewBox="0 0 24 16"><path d="M4 15a4 4 0 010-8 6 6 0 0111-2 4.5 4.5 0 015 4 3 3 0 01-1 6z" fill="#9cc4ee" /></svg>
        <span className="ml-[6px]">10°C</span>
        <span className="ml-[7px]">Nuageux</span>
      </div>
      <div className="ml-[22px] flex items-center gap-[6px]">
        <svg width="17" height="16" viewBox="0 0 16 16" fill="none" stroke="#eee"><path d="M3 11l5-5 5 5" strokeWidth="1.4" /></svg>
        <svg width="17" height="18" viewBox="0 0 16 18" fill="none" stroke="#ddd"><rect x="3" y="4" width="8" height="9" rx="2" /><path d="M11 7l3-1v5l-3-1M4 16h6" /></svg>
        <svg width="17" height="18" viewBox="0 0 16 18"><rect x="3" y="0" width="10" height="18" rx="5" fill="#1e7fe0" /><path d="M5 6l6 6-3 2V4l3 2-6 6" stroke="#fff" fill="none" /></svg>
        <svg width="17" height="14" viewBox="0 0 24 16"><path d="M4 15a4 4 0 010-8 6 6 0 0111-2 4.5 4.5 0 015 4 3 3 0 01-1 6z" fill="#e8e8e8" /></svg>
        <svg width="17" height="16" viewBox="0 0 16 16" fill="none" stroke="#eee"><rect x="3" y="2" width="12" height="9" /><rect x="1" y="4" width="5" height="7" fill="#0f0f10" /><path d="M7 14h6" /></svg>
        <svg width="17" height="16" viewBox="0 0 16 16" fill="none" stroke="#ddd"><path d="M1 6v4h3l4 3V3L4 6z" /><path d="M10 5c1 2 1 4 0 6M12 3c2 3 2 7 0 10" /></svg>
        <svg width="17" height="18" viewBox="0 0 16 18"><path d="M8 1v8" stroke="#888" /><rect x="2" y="3" width="4" height="3" fill="#ddd" /><rect x="10" y="3" width="4" height="3" fill="#ddd" /><rect x="4" y="9" width="8" height="8" fill="#d01f2a" /></svg>
      </div>
      <div className="w-[72px] h-[30px] -mt-[8px] text-center text-[11px] leading-[14px] text-[#e8e8e8] pt-[1px]">
        <div>19:48</div>
        <div>03/12/2024</div>
      </div>
      <div className="w-[36px] mr-[12px] flex justify-center">
        <svg width="16" height="18" viewBox="0 0 16 18" fill="none"><path d="M1 1h14v12H9l-2 3v-3H1z" fill="#eee" /><path d="M3.5 4h9M3.5 7h9M3.5 10h6" stroke="#333" /></svg>
      </div>
    </div>
  );
}

export default function App() {
  return (
    <div className="w-[1800px] h-[1004px] overflow-hidden flex flex-col bg-white font-['Liberation_Sans',Arial,sans-serif]">
      <TopBar />
      <ToolBar />
      <SymbolBar />
      <InfoPanel />
      <div className="flex-1 flex min-h-0">
        <div className="w-[1738px] flex flex-col shrink-0">
          <TabsRow />
          <ChartArea />
        </div>
        <PriceAxis />
      </div>
      <TimeAxis />
      <BottomBar />
      <TaskBar />
    </div>
  );
}
